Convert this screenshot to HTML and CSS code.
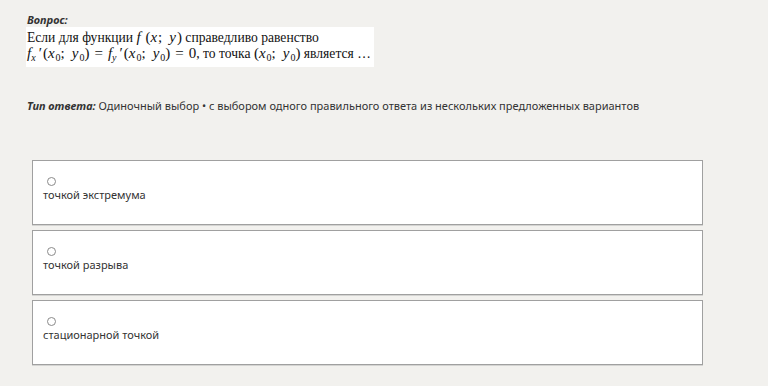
FILE: index.html
```html
<!DOCTYPE html>
<html lang="ru">

<head>
    <meta charset="UTF-8">
    <title>Вопрос</title>
    <link rel="stylesheet" href="styles.css">
</head>

<body>
    <div class="question">
        <div class="label">Вопрос:</div>
        <div class="question-text">
            Если для функции <span class="m"><i>f</i> (<i>x</i>;<span class="sp"></span><i>y</i>)</span> справедливо равенство<br>
            <span class="m"><i>f<sub>x</sub></i><span class="pr">′</span>(<i>x</i><sub>0</sub>;<span class="sp"></span><i>y</i><sub>0</sub>)<span class="eq">=</span><i>f<sub>y</sub></i><span class="pr">′</span>(<i>x</i><sub>0</sub>;<span class="sp"></span><i>y</i><sub>0</sub>)<span class="eq">=</span>0</span>, то точка <span class="m">(<i>x</i><sub>0</sub>;<span class="sp"></span><i>y</i><sub>0</sub>)</span> является …
        </div>
    </div>

    <div class="answer-type">
        <b>Тип ответа:</b> Одиночный выбор • с выбором одного правильного ответа из нескольких предложенных вариантов
    </div>

    <div class="options">
        <label class="option">
            <span class="radio"></span>
            <span class="option-text">точкой экстремума</span>
        </label>
        <label class="option">
            <span class="radio"></span>
            <span class="option-text">точкой разрыва</span>
        </label>
        <label class="option">
            <span class="radio"></span>
            <span class="option-text">стационарной точкой</span>
        </label>
    </div>
</body>

</html>
```

FILE: styles.css
```css
html,
body {
    margin: 0;
    padding: 0;
}

body {
    font-family: "Noto Sans", "Open Sans", sans-serif;
    font-size: 11px;
    color: #333;
    background-color: #f2f1ee;
    padding: 12px 0 0 27px;
    height: 386px;
    box-sizing: border-box;
}

.label {
    font-style: italic;
    font-weight: bold;
    font-size: 11px;
    line-height: 15px;
    color: #333;
}

.question-text {
    display: inline-block;
    margin-left: -1px;
    background-color: #fff;
    font-family: "Liberation Serif", serif;
    font-size: 13.6px;
    line-height: 16px;
    color: #111;
    padding: 3px 3px 5px 1px;
}

.m {
    font-size: 15px;
    line-height: 1;
}

.m i {
    padding-right: 1px;
}

.m sub {
    font-size: 10px;
    line-height: 0;
    vertical-align: -3px;
}

.m i sub {
    font-style: italic;
}

.m .sp {
    display: inline-block;
    width: 7px;
}

.m .pr {
    margin: 0 1px 0 2px;
}

.m .eq {
    margin: 0 5px;
}

.answer-type {
    margin-top: 31px;
    line-height: 16px;
}

.answer-type b {
    font-style: italic;
}

.options {
    margin: 46px 0 0 5px;
    width: 671px;
    display: flex;
    flex-direction: column;
    gap: 5px;
}

.option {
    display: flex;
    flex-direction: column;
    align-items: flex-start;
    height: 65px;
    box-sizing: border-box;
    background-color: #fff;
    border: 1px solid #a0a0a0;
    box-shadow: 0 1px 0 #d4d4d2;
    padding: 16px 10px 0 10px;
}

.radio {
    width: 9px;
    height: 9px;
    border: 1px solid #8a8a8a;
    border-radius: 50%;
    margin-left: 4px;
    box-sizing: border-box;
}

.option-text {
    margin-top: 1px;
    font-size: 11px;
    line-height: 15px;
    color: #333;
}
```
